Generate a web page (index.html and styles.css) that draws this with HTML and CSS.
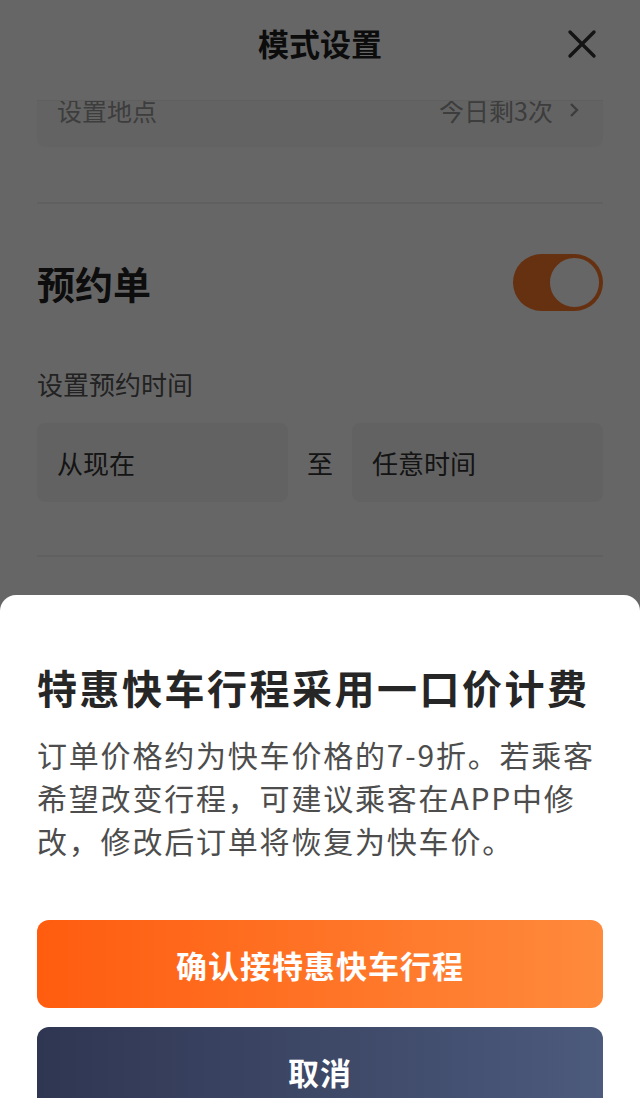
FILE: index.html
```html
<!DOCTYPE html>
<html lang="zh-CN">
<head>
    <meta charset="UTF-8">
    <meta name="viewport" content="width=device-width, initial-scale=1.0">
    <title>模式设置</title>
    <link rel="stylesheet" href="styles.css">
</head>
<body>
    <div class="page">
        <div class="header">
            <div class="header-title">模式设置</div>
            <div class="close-btn">
                <svg width="30" height="30" viewBox="0 0 30 30">
                    <path d="M3 3 L27 27 M27 3 L3 27" stroke="#333" stroke-width="3.4" stroke-linecap="round" fill="none"/>
                </svg>
            </div>
        </div>

        <div class="place-box">
            <div class="place-row">
                <span class="place-label">设置地点</span>
                <span class="place-count">今日剩3次
                    <svg width="14" height="18" viewBox="0 0 14 18">
                        <path d="M4 3 L10 9 L4 15" stroke="#999" stroke-width="2.4" fill="none"/>
                    </svg>
                </span>
            </div>
        </div>

        <div class="divider divider-top"></div>

        <div class="booking-row">
            <div class="booking-title">预约单</div>
            <div class="toggle on">
                <div class="toggle-knob"></div>
            </div>
        </div>

        <div class="section-label">设置预约时间</div>

        <div class="time-range">
            <div class="time-box">从现在</div>
            <div class="time-sep">至</div>
            <div class="time-box">任意时间</div>
        </div>

        <div class="divider divider-bottom"></div>
    </div>

    <!-- dim layer + bottom sheet -->
    <div class="mask"></div>
    <div class="sheet">
        <div class="sheet-title">特惠快车行程采用一口价计费</div>
        <div class="sheet-text">订单价格约为快车价格的7-9折。若乘客希望改变行程，可建议乘客在APP中修改，修改后订单将恢复为快车价。</div>
        <div class="btn btn-confirm">确认接特惠快车行程</div>
        <div class="btn btn-cancel">取消</div>
    </div>
</body>
</html>
```

FILE: styles.css
```css
* {
    box-sizing: border-box;
}

body {
    margin: 0;
    width: 640px;
    height: 1098px;
    overflow: hidden;
    background-color: #fff;
    font-family: "Noto Sans CJK SC", "Noto Sans", sans-serif;
    color: #222;
}

.page {
    display: flex;
    flex-direction: column;
}

.header {
    position: relative;
    height: 100px;
    display: flex;
    justify-content: center;
    align-items: flex-start;
    padding-top: 23px;
    background-color: #fff;
}

.header-title {
    font-size: 31px;
    line-height: 40px;
    font-weight: 700;
    color: #1e1e1e;
}

.close-btn {
    position: absolute;
    top: 29px;
    right: 43px;
    width: 30px;
    height: 30px;
}

.place-box {
    margin: 0 37px;
    height: 47px;
    overflow: hidden;
    background-color: #f7f7f7;
    border-top: 1px solid #eee;
    border-radius: 0 0 8px 8px;
}

.place-row {
    display: flex;
    justify-content: space-between;
    align-items: center;
    margin-top: -6px;
    padding: 0 22px 0 20px;
    height: 30px;
    font-size: 25px;
    color: #999;
}

.place-count {
    display: flex;
    align-items: center;
    gap: 14px;
}

.divider {
    margin: 0 37px;
    height: 2px;
    background-color: #efefef;
}

.divider-top {
    margin-top: 55px;
}

.divider-bottom {
    margin-top: 53px;
}

.booking-row {
    display: flex;
    justify-content: space-between;
    align-items: center;
    margin: 50px 37px 0;
    height: 57px;
}

.booking-title {
    font-size: 38px;
    line-height: 50px;
    font-weight: 700;
    color: #222;
}

.toggle {
    width: 90px;
    height: 57px;
    border-radius: 29px;
    background-color: #ff7a2a;
    display: flex;
    justify-content: flex-end;
    align-items: center;
    padding: 2px;
}

.toggle-knob {
    width: 53px;
    height: 53px;
    border-radius: 50%;
    background-color: #fff;
    border: 2px solid #ff7a2a;
}

.section-label {
    margin: 56px 37px 0;
    font-size: 26px;
    line-height: 34px;
    color: #555;
}

.time-range {
    display: grid;
    grid-template-columns: 1fr 64px 1fr;
    align-items: center;
    margin: 22px 37px 0;
}

.time-box {
    height: 79px;
    display: flex;
    align-items: center;
    padding-left: 20px;
    border-radius: 8px;
    background-color: #f5f5f5;
    font-size: 26px;
    color: #333;
}

.time-sep {
    text-align: center;
    font-size: 26px;
    color: #333;
}

.mask {
    position: fixed;
    inset: 0;
    background-color: rgba(0, 0, 0, 0.6);
}

.sheet {
    position: fixed;
    left: 0;
    right: 0;
    top: 595px;
    bottom: 0;
    padding: 64px 37px 0;
    background-color: #fff;
    border-radius: 16px 16px 0 0;
}

.sheet-title {
    font-size: 40px;
    line-height: 56px;
    font-weight: 700;
    letter-spacing: 2.5px;
    color: #262626;
    white-space: nowrap;
}

.sheet-text {
    margin-top: 18px;
    font-size: 30px;
    line-height: 43px;
    letter-spacing: 1.8px;
    color: #4d4d4d;
}

.btn {
    height: 88px;
    display: flex;
    justify-content: center;
    align-items: center;
    border-radius: 12px;
    font-size: 31px;
    font-weight: 700;
    letter-spacing: 1px;
    color: #fff;
}

.btn-confirm {
    margin-top: 58px;
    background-image: linear-gradient(90deg, #ff5c0f, #ff8a3c);
}

.btn-cancel {
    margin-top: 19px;
    background-image: linear-gradient(90deg, #2f3652, #4c5a7c);
}
```
